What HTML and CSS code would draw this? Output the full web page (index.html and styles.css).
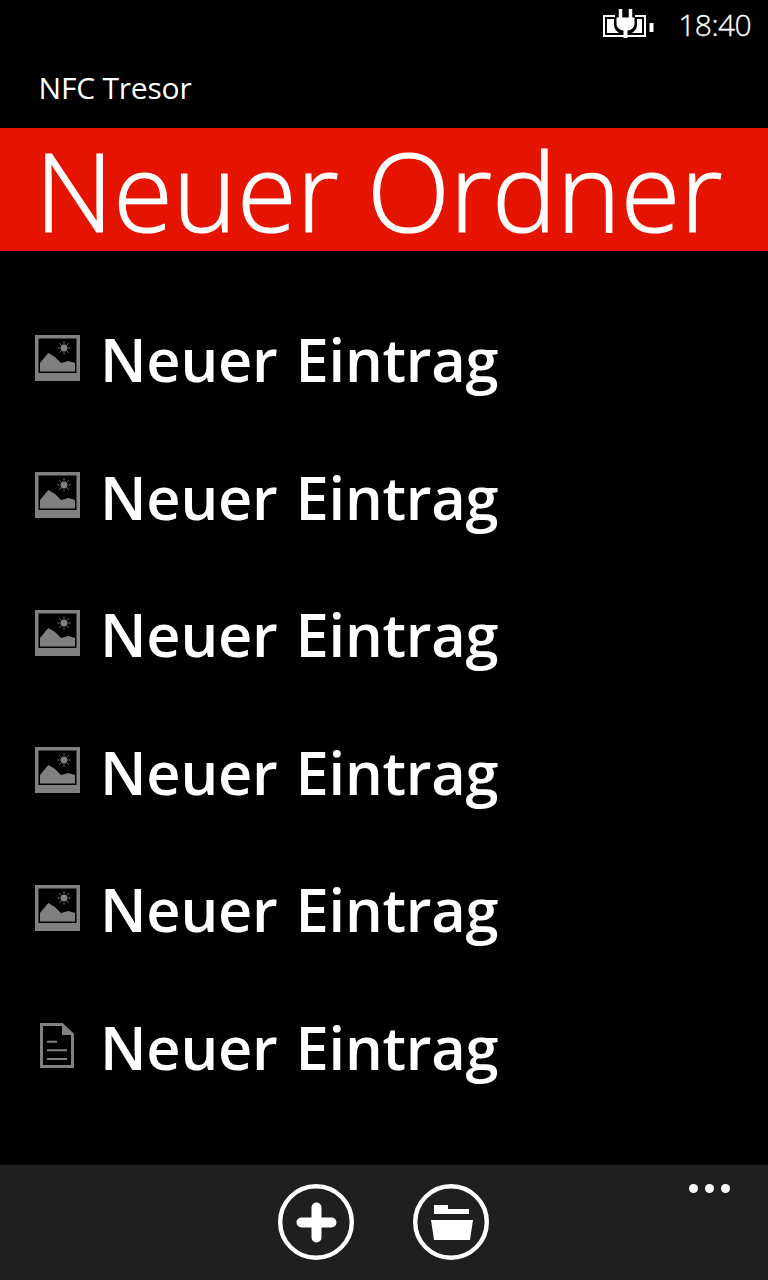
FILE: index.html
```html
<!DOCTYPE html>
<html lang="de">
<head>
<meta charset="utf-8">
<title>NFC Tresor</title>
<link rel="stylesheet" href="styles.css">
</head>
<body>
<svg class="defs" width="0" height="0" aria-hidden="true">
  <symbol id="pic" viewBox="0 0 45 46">
    <path fill-rule="evenodd" d="M0 0H45V46H0ZM3.500 3.500V38H41.500V3.500Z" fill="#808080"/>
    <path d="M5 36.500V28L13.300 18L20 22L26 28L33.500 26L40 28V36.500Z" fill="#808080"/>
    <circle cx="29" cy="13" r="3.500" fill="#808080"/>
    <path d="M29 6.500V8.500M29 17.500V19.500M22.500 13H24.500M33.500 13H35.500M24.400 8.400L25.800 9.800M32.200 16.200L33.600 17.600M24.400 17.600L25.800 16.200M32.200 9.800L33.600 8.400" stroke="#808080" stroke-width="1"/>
  </symbol>
</svg>
<div class="phone">
  <header class="status">
    <svg class="battery" width="52" height="31" viewBox="0 0 52 31">
      <path d="M13 8H2V28H43V8H33" fill="none" stroke="#fff" stroke-width="2"/>
      <path d="M5 11H12V17C12 20 14 23 17 25H5ZM40 11H35V17C35 20 33 23 30 25H40Z" fill="#fff"/>
      <rect x="47.500" y="15" width="4" height="9" fill="#fff"/>
      <path d="M18.500 1V10M28.500 1V10" stroke="#fff" stroke-width="3.500"/>
      <path d="M14.500 9.500H32.500V16C32.500 19.500 29 22.500 25.500 22.500V30H21.500V22.500C18 22.500 14.500 19.500 14.500 16Z" fill="#fff"/>
    </svg>
    <span class="clock">18:40</span>
  </header>
  <div class="app-name">NFC Tresor</div>
  <h1 class="title">Neuer Ordner</h1>
  <ul class="list">
    <li class="row"><svg class="icon" width="45" height="46"><use href="#pic"/></svg><span class="label">Neuer Eintrag</span></li>
    <li class="row"><svg class="icon" width="45" height="46"><use href="#pic"/></svg><span class="label">Neuer Eintrag</span></li>
    <li class="row"><svg class="icon" width="45" height="46"><use href="#pic"/></svg><span class="label">Neuer Eintrag</span></li>
    <li class="row"><svg class="icon" width="45" height="46"><use href="#pic"/></svg><span class="label">Neuer Eintrag</span></li>
    <li class="row"><svg class="icon" width="45" height="46"><use href="#pic"/></svg><span class="label">Neuer Eintrag</span></li>
    <li class="row"><svg class="icon" width="45" height="46" viewBox="0 0 45 46">
      <path d="M6.500 2.500H27L37.500 12.500V44.500H6.500Z" fill="none" stroke="#808080" stroke-width="3"/>
      <path d="M27 1L39 13H27Z" fill="#808080"/>
      <path d="M12 19.750H22M12 28.350H32M12 37H32" stroke="#808080" stroke-width="2"/>
    </svg><span class="label">Neuer Eintrag</span></li>
  </ul>
  <footer class="appbar">
    <button class="round" aria-label="Neu">
      <svg width="76" height="76" viewBox="0 0 76 76">
        <circle cx="38" cy="38" r="35.800" fill="none" stroke="#fff" stroke-width="4.400"/>
        <path d="M38.500 23.500V53.500M23.500 38.500H53.500" stroke="#fff" stroke-width="10" stroke-linecap="round"/>
      </svg>
    </button>
    <button class="round" aria-label="Ordner">
      <svg width="76" height="76" viewBox="0 0 76 76">
        <circle cx="38" cy="38" r="35.800" fill="none" stroke="#fff" stroke-width="4.400"/>
        <path d="M21 21H35V25H56V30H21Z" fill="#fff"/>
        <path d="M18 36H60L57 56H21Z" fill="#fff"/>
      </svg>
    </button>
    <div class="dots"><i></i><i></i><i></i></div>
  </footer>
</div>
</body>
</html>
```
FILE: styles.css
```css
* { box-sizing: border-box; }
html, body { margin: 0; padding: 0; background: #000; }
.defs { position: absolute; }
.phone {
  width: 768px;
  height: 1280px;
  display: flex;
  flex-direction: column;
  background: #000;
  color: #fff;
  font-family: "Open Sans", "Noto Sans", sans-serif;
  overflow: hidden;
}
.status {
  height: 50px;
  display: flex;
  justify-content: flex-end;
  align-items: center;
  gap: 24px;
  padding-right: 17px;
}
.battery { display: block; margin-bottom: 4px; }
.clock {
  font-size: 30px;
  font-weight: 300;
  line-height: 50px;
  letter-spacing: -0.600px;
  -webkit-text-stroke: 0.300px #fff;
}
.app-name {
  height: 78px;
  padding: 18px 0 0 38.500px;
  font-size: 30px;
  letter-spacing: -0.200px;
  line-height: 40px;
}
.title {
  margin: 0;
  height: 123px;
  padding-left: 35px;
  background: #e51400;
  font-size: 108.500px;
  font-weight: 300;
  line-height: 124px;
  white-space: nowrap;
  -webkit-text-stroke: 1.200px #fff;
}
.list {
  list-style: none;
  margin: 0;
  padding: 38px 0 0;
  flex: 1;
}
.row {
  height: 137.500px;
  display: flex;
  align-items: center;
  padding-left: 35px;
  gap: 20px;
}
.icon { flex: none; display: block; }
.label {
  padding-top: 2px;
  font-size: 59.500px;
  font-weight: 600;
  letter-spacing: -0.250px;
  word-spacing: 3px;
  line-height: 137px;
  white-space: nowrap;
}
.appbar {
  position: relative;
  height: 115px;
  background: #1f1f1f;
  display: flex;
  justify-content: center;
  padding: 19px 1px 0 0;
  gap: 59px;
}
.round { width: 76px; height: 76px; padding: 0; border: 0; background: none; }
.round svg { display: block; }
.dots { position: absolute; right: 38px; top: 19px; display: flex; gap: 7px; }
.dots i { width: 9px; height: 9px; border-radius: 50%; background: #fff; }
```
